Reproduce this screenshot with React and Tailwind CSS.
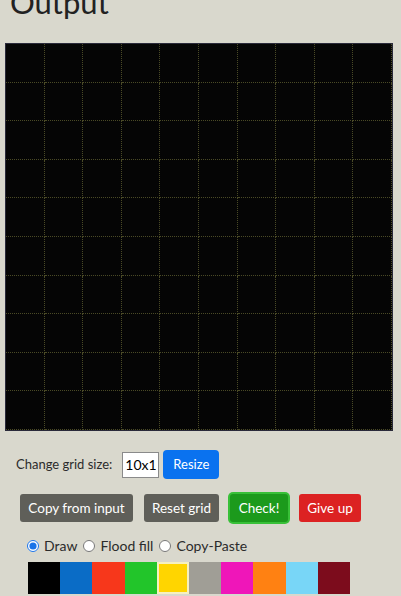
import { useState } from "react";

const COLORS = [
  "#000000",
  "#0a6cc6",
  "#f7371b",
  "#22c52a",
  "#ffd500",
  "#a09e96",
  "#ef16b9",
  "#ff8112",
  "#78d6f7",
  "#7c0c1c",
];

const App = () => {
  const [mode, setMode] = useState("draw");
  const [size, setSize] = useState("10x10");
  const [selected, setSelected] = useState(4);
  const cells = Array.from({ length: 100 });

  return (
    <div
      className="min-h-[596px] w-[401px] overflow-hidden bg-[#d9d8cd] text-[#2b2b2b]"
      style={{ fontFamily: "Lato, 'Open Sans', sans-serif" }}
    >
      <h1 className="-mt-[13px] ml-[10px] h-[30px] text-[31px] font-normal leading-[30px] text-[#222]">
        Output
      </h1>

      {/* Output grid */}
      <div className="ml-[5px] mt-[26px] grid h-[388px] w-[388px] grid-cols-10 grid-rows-10 border border-[#2a2a3a] bg-[#050505]">
        {cells.map((_, i) => (
          <div
            key={i}
            className="border-r border-b border-dotted border-[#4a4a26]"
          />
        ))}
      </div>

      {/* Controls */}
      <div className="ml-[16px] mt-[19px] flex items-center">
        <span className="text-[13px]">Change grid size:</span>
        <input
          value={size}
          onChange={(e) => setSize(e.target.value)}
          className="ml-[10px] h-[26px] w-[37px] border border-[#8a8a8a] bg-white px-[2px] text-[14px] text-black outline-none"
        />
        <button className="ml-[4px] h-[29px] w-[56px] rounded-[4px] bg-[#0a72ef] text-[13px] text-white">
          Resize
        </button>
      </div>

      <div className="ml-[20px] mt-[15px] flex items-center gap-[11px]">
        <button className="h-[28px] w-[113px] rounded-[3px] bg-[#5f5f59] text-[13.5px] text-white">
          Copy from input
        </button>
        <button className="h-[28px] w-[75px] rounded-[3px] bg-[#5f5f59] text-[13.5px] text-white">
          Reset grid
        </button>
        <button className="h-[28px] w-[58px] rounded-[3px] bg-[#1c9a1c] text-[13.5px] text-white ring-2 ring-[#38c038]">
          Check!
        </button>
        <button className="h-[28px] w-[62px] rounded-[3px] bg-[#dc2222] text-[13.5px] text-white">
          Give up
        </button>
      </div>

      <div className="ml-[27px] mt-[13px] flex items-center text-[14px]">
        {[
          ["draw", "Draw"],
          ["fill", "Flood fill"],
          ["copy", "Copy-Paste"],
        ].map(([key, label]) => (
          <label key={key} className="mr-[6px] flex items-center">
            <input
              type="radio"
              name="mode"
              checked={mode === key}
              onChange={() => setMode(key)}
              className="mr-[5px] h-[12px] w-[12px] accent-[#1a73e8]"
            />
            {label}
          </label>
        ))}
      </div>

      <div className="ml-[28px] mt-[6px] flex">
        {COLORS.map((c, i) => (
          <div
            key={c}
            onClick={() => setSelected(i)}
            className={`h-[32px] w-[32.2px] ${
              selected === i ? "border-2 border-[#f5f0c0]" : ""
            }`}
            style={{ backgroundColor: c }}
          />
        ))}
      </div>
    </div>
  );
};

export default App;
